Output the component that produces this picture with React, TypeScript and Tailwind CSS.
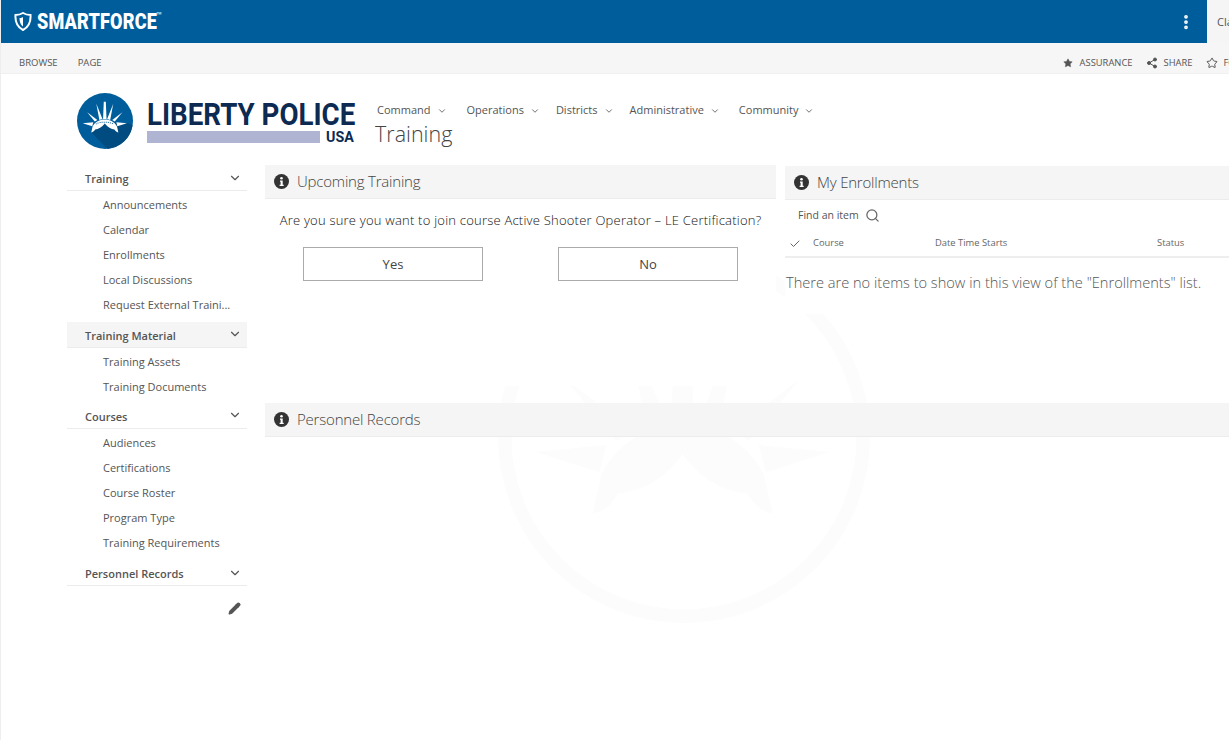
import { ChevronDown, Search, Check, Share2, Star, EllipsisVertical, Pencil } from 'lucide-react';

const font = 'font-["Open_Sans","Noto_Sans",sans-serif]';

const sections = [
    { title: 'Training', items: ['Announcements', 'Calendar', 'Enrollments', 'Local Discussions', 'Request External Traini...'], head: 'h-[24px] mt-0 pt-[2px]', shaded: false },
    { title: 'Training Material', items: ['Training Assets', 'Training Documents'], head: 'h-[26px] mt-[4px] pt-[3px]', shaded: true },
    { title: 'Courses', items: ['Audiences', 'Certifications', 'Course Roster', 'Program Type', 'Training Requirements'], head: 'h-[25px] mt-[4px] pt-[2px]', shaded: false },
    { title: 'Personnel Records', items: [], head: 'h-[24px] mt-[6px] pt-[2px]', shaded: false },
];

const navLinks = [
    { label: 'Command', gap: 'mr-[20px]' },
    { label: 'Operations', gap: 'mr-[16px]' },
    { label: 'Districts', gap: 'mr-[16px]' },
    { label: 'Administrative', gap: 'mr-[19px]' },
    { label: 'Community', gap: '' },
];

// left half of the crown, mirrored around x=27.3 for the right side
const rays = ['M5.600 29.700L16 28.700 15 32.700z', 'M10 19l10 7.500-2.500 1.500z', 'M19 10.500l6 15-3 1z'];

function Crown() {
    return (
        <>
            {rays.map(d => (
                <g key={d}>
                    <path d={d} fill="currentColor" />
                    <path d={d} fill="currentColor" transform="matrix(-1 0 0 1 54.600 0)" />
                </g>
            ))}
            <path d="M26.300 8.500h2l.7 17h-3.400z" fill="currentColor" />
            <path d="M27.300 26C22 26 18 28 15.300 33L14 38.800c2-.3 3-1.800 3.800-3 3.200-.3 6.700-1.800 9.500-5.800 2.800 4 6.300 5.500 9.500 5.800.8 1.200 1.800 2.700 3.800 3L39.300 33C36.600 28 32.600 26 27.300 26z" fill="currentColor" />
        </>
    );
}

function Logo() {
    return (
        <svg width="56" height="56" viewBox="0 0 55 55" className="shrink-0">
            <circle cx="27.500" cy="27.500" r="27.500" fill="#005d9c" />
            <path d="M14 38.800L27.300 30l23-.5 4.200 2.500A27.500 27.500 0 0 1 30 54.900z" fill="#004c80" />
            <g className="text-white"><Crown /></g>
            <path d="M18.500 30.500C22 28 32 28 36 30.500" fill="none" stroke="#005d9c" strokeWidth="1" strokeDasharray="1 1" />
        </svg>
    );
}

function Watermark() {
    return (
        <svg width="372" height="372" viewBox="0 0 55 55" className="absolute left-[497px] top-[251px] text-[#fcfcfc]">
            <circle cx="27.500" cy="27.500" r="26.500" fill="none" stroke="currentColor" strokeWidth="2" />
            <Crown />
        </svg>
    );
}

function InfoDot() {
    return (
        <svg width="15" height="15" viewBox="0 0 15 15" className="shrink-0">
            <circle cx="7.500" cy="7.500" r="7.500" fill="#333" />
            <circle cx="7.500" cy="4.200" r="1.300" fill="white" />
            <path d="M6 6.500h2.700v4.300h1v1.200H5.600v-1.200h1V7.700H6z" fill="white" />
        </svg>
    );
}

function PanelTitle({ title }: { title: string }) {
    return (
        <div className="flex h-[34px] items-center gap-[8px] border-b border-[#ececec] bg-[#f5f5f5] pl-[9px]">
            <InfoDot />
            <span className="text-[15px] font-light tracking-[-0.2px] text-[#444]">{title}</span>
        </div>
    );
}

export default function App() {
    return (
        <div className={`relative h-[740px] w-[1229px] overflow-hidden border-l border-[#eeeeee] bg-white ${font}`}>
            <Watermark />

            {/* top bar */}
            <div className="relative flex h-[43px] bg-[#f5f5f5]">
                <div className="flex w-[1206px] shrink-0 items-center bg-[#005d9c] pl-[13px] text-white">
                    <svg width="18" height="19" viewBox="0 0 18 19" className="shrink-0">
                        <path d="M9 1C6.500 2.500 4 3 1.500 3c-.5 7 1.500 12 7.500 15 6-3 8-8 7.500-15C14 3 11.500 2.500 9 1z" fill="none" stroke="white" strokeWidth="2" />
                        <path d="M9 5c-1 .6-2 .9-3.500 1 0 4 1 6.500 3.500 8.500z" fill="white" />
                    </svg>
                    <span className='ml-[5px] origin-left scale-x-[0.82] font-["Roboto",sans-serif] text-[22px] font-black tracking-[0.2px]'>SMARTFORCE</span>
                    <span className="-ml-[27px] -mt-[13px] text-[7px]">™</span>
                    <div className="ml-auto mr-[12px] flex">
                        <EllipsisVertical size={18} strokeWidth={3} />
                    </div>
                </div>
                <span className="pl-[10px] pt-[14px] text-[11px] text-[#555]">Claire</span>
            </div>

            {/* ribbon */}
            <div className="relative flex h-[31px] items-center whitespace-nowrap border-b border-[#f0f0f0] bg-[#f6f6f6] pl-[18px] pt-[10px] text-[9.500px] text-[#555]">
                <span>BROWSE</span>
                <span className="ml-[20px]">PAGE</span>
                <div className="ml-[961px] flex items-center text-[9.400px]">
                    <Star size={10} fill="#555" strokeWidth={1} />
                    <span className="ml-[7px]">ASSURANCE</span>
                    <Share2 size={12} fill="#555" className="ml-[13px]" />
                    <span className="ml-[6px]">SHARE</span>
                    <Star size={12} className="ml-[13px]" />
                    <span className="ml-[6px]">FOLLOW</span>
                </div>
            </div>

            <div className="relative pl-[66px]">
                {/* site header */}
                <div className="flex h-[91px] pl-[10px] pt-[19px]">
                    <Logo />
                    <div className="ml-[14px] w-[209px] shrink-0 pt-[6px]">
                        <div className='h-[31px] origin-left scale-x-[0.865] whitespace-nowrap font-["Roboto",sans-serif] text-[32px] font-bold leading-[30px] text-[#0c2a52]'>LIBERTY POLICE</div>
                        <div className="flex items-center">
                            <div className="h-[12px] w-[173px] bg-[#aeb4d1]" />
                            <span className='ml-[6px] mt-[1px] origin-left scale-x-[0.95] font-["Roboto",sans-serif] text-[15px] font-bold leading-[12px] text-[#0c2a52]'>USA</span>
                        </div>
                    </div>
                    <div className="ml-[19px]">
                        <div className="mt-[9px] flex h-[16px] items-center pl-[2px] pt-[1px] text-[11px] text-[#555]">
                            {navLinks.map(link => (
                                <span key={link.label} className={`flex items-center gap-[6px] ${link.gap}`}>
                                    {link.label}
                                    <ChevronDown size={10} />
                                </span>
                            ))}
                        </div>
                        <div className="text-[21.500px] font-light leading-[32px] text-[#444]">Training</div>
                    </div>
                </div>

                <div className="flex">
                    {/* left nav */}
                    <div className="w-[180px] shrink-0 pt-[2px]">
                        {sections.map(section => (
                            <div key={section.title}>
                                <div className={`flex items-center justify-between border-b border-[#ececec] pl-[18px] pr-[5px] text-[11px] font-semibold text-[#555] ${section.head} ${section.shaded ? 'bg-[#f5f5f5]' : ''}`}>
                                    {section.title}
                                    <ChevronDown size={14} className="-mt-[4px]" />
                                </div>
                                <div className="pt-[2px]">
                                    {section.items.map(item => (
                                        <div key={item} className="flex h-[25px] items-center whitespace-nowrap pl-[36px] text-[11px] text-[#555]">{item}</div>
                                    ))}
                                </div>
                            </div>
                        ))}
                        <div className="flex justify-end pr-[6px] pt-[14px] text-[#555]">
                            <Pencil size={13} fill="#555" />
                        </div>
                    </div>

                    {/* main zones */}
                    <div className="ml-[18px] min-w-0 flex-1">
                        <div className="flex gap-[9px]">
                            <div className="h-[221px] w-[511px] shrink-0 bg-white">
                                <PanelTitle title="Upcoming Training" />
                                <p className="pt-[12px] text-center text-[13px] font-light tracking-[0.22px] text-[#111]">
                                    Are you sure you want to join course Active Shooter Operator – LE Certification?
                                </p>
                                <div className="flex gap-[75px] pl-[38px] pt-[16px]">
                                    <button className="h-[34px] w-[180px] border border-[#ababab] pt-[3px] text-[13px] text-[#444]">Yes</button>
                                    <button className="h-[34px] w-[180px] border border-[#ababab] pt-[3px] text-[13px] text-[#444]">No</button>
                                </div>
                            </div>
                            <div className="h-[149px] min-w-0 flex-1 bg-white pt-[1px]">
                                <PanelTitle title="My Enrollments" />
                                <div className="flex h-[30px] items-center pl-[13px] pt-[1px] text-[10.500px] text-[#555]">
                                    Find an item
                                    <Search size={15} className="ml-[6px] text-[#666]" />
                                </div>
                                <div className="flex h-[28px] items-center border-b-2 border-[#eeeeee] pt-[1px] text-[9.400px] text-[#666]">
                                    <Check size={12} className="ml-[4px]" />
                                    <span className="ml-[12px] w-[122px]">Course</span>
                                    <span className="w-[222px]">Date Time Starts</span>
                                    <span>Status</span>
                                </div>
                                <p className="whitespace-nowrap pl-[1px] pt-[14px] text-[14.600px] font-light text-[#555]">There are no items to show in this view of the "Enrollments" list.</p>
                            </div>
                        </div>
                        <div className="mt-[17px]">
                            <PanelTitle title="Personnel Records" />
                        </div>
                    </div>
                </div>
            </div>
        </div>
    );
}
